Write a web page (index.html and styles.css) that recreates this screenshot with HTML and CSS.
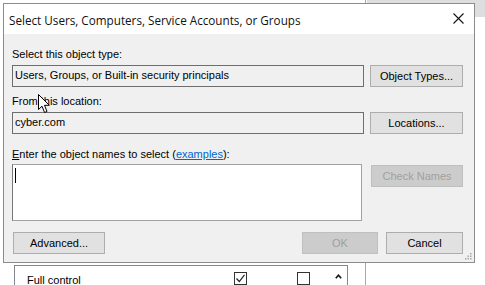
FILE: index.html
```html
<!DOCTYPE html>
<html lang="en">
<head>
  <meta charset="UTF-8">
  <title>Select Users, Computers, Service Accounts, or Groups</title>
  <link rel="stylesheet" href="styles.css">
</head>
<body>
  <div class="desk">
    <!-- window behind the dialog -->
    <div class="behind">
      <div class="pane">
        <div class="perms">
          <div class="perm-row">
            <span class="perm-name">Full control</span>
            <span class="chk">
              <svg width="11" height="11" viewBox="0 0 11 11"><path d="M1.5 5.5 L4.3 8.5 L9.5 1.8" fill="none" stroke="#222" stroke-width="1.2"/></svg>
            </span>
            <span></span>
            <span class="chk"></span>
          </div>
          <div class="scroll">
            <svg width="7" height="5" viewBox="0 0 7 5"><path d="M0.8 4.2 L3.5 1.2 L6.2 4.2" fill="none" stroke="#111" stroke-width="1.6"/></svg>
          </div>
        </div>
      </div>
      <div class="side"><div class="side-head"></div></div>
    </div>

    <div class="dialog">
      <div class="titlebar">
        <span class="title">Select Users, Computers, Service Accounts, or Groups</span>
        <svg class="close" width="11" height="11" viewBox="0 0 11 11"><path d="M0.5 0.5 L10.5 10.5 M10.5 0.5 L0.5 10.5" stroke="#111" stroke-width="1.1"/></svg>
      </div>

      <div class="body">
        <div class="lbl">Select this object type:</div>
        <div class="row">
          <div class="field ro">Users, Groups, or Built-in security principals</div>
          <button class="btn">Object Types...</button>
        </div>

        <div class="lbl second">From this location:</div>
        <div class="row">
          <div class="field ro">cyber.com</div>
          <button class="btn">Locations...</button>
        </div>

        <div class="lbl third"><u>E</u>nter the object names to select (<a href="#">examples</a>):</div>
        <div class="row names-row">
          <div class="field names"><span class="caret"></span></div>
          <button class="btn check" disabled>Check Names</button>
        </div>

        <div class="footer">
          <button class="btn adv">Advanced...</button>
          <span class="spacer"></span>
          <button class="btn ok" disabled>OK</button>
          <button class="btn cancel">Cancel</button>
        </div>
      </div>

      <svg class="grip" width="7" height="7" viewBox="0 0 7 7">
        <rect x="5" y="0" width="1.5" height="1.5" fill="#a8a8a8"/>
        <rect x="2.5" y="2.5" width="1.5" height="1.5" fill="#a8a8a8"/>
        <rect x="5" y="2.5" width="1.5" height="1.5" fill="#a8a8a8"/>
        <rect x="0" y="5" width="1.5" height="1.5" fill="#a8a8a8"/>
        <rect x="2.5" y="5" width="1.5" height="1.5" fill="#a8a8a8"/>
        <rect x="5" y="5" width="1.5" height="1.5" fill="#a8a8a8"/>
      </svg>
    </div>

    <!-- mouse pointer over the dialog -->
    <svg class="pointer" width="13" height="20" viewBox="0 0 13 20">
      <path d="M0.5 0.5 L0.5 15.5 L4 12.2 L6.6 18.5 L9 17.5 L6.5 11.3 L11.3 11.3 Z" fill="#fff" stroke="#000" stroke-width="1"/>
    </svg>
  </div>
</body>
</html>
```

FILE: styles.css
```css
body { margin: 0; background: #fff; font-family: "Liberation Sans", Arial, sans-serif; font-size: 11px; color: #000; }
.desk { position: relative; width: 485px; height: 285px; overflow: hidden; }

/* window behind */
.behind { display: flex; height: 285px; }
.pane { width: 366px; border-right: 1px solid #a8a8a8; padding: 265px 0 0 14px; box-sizing: border-box; }
.perms { width: 334px; height: 60px; border: 1px solid #828790; background: #fff; display: flex; box-sizing: border-box; }
.perm-row { flex: 1; display: grid; grid-template-columns: 207px 13px 50px 13px; align-items: start; padding: 6px 0 0 12px; line-height: 13px; }
.perm-name { padding-top: 2px; }
.chk { width: 13px; height: 13px; border: 1px solid #333; box-sizing: border-box; background: #fff; display: flex; align-items: center; justify-content: center; }
.scroll { width: 17px; display: flex; justify-content: center; padding-top: 8px; box-sizing: border-box; }
.scroll svg { display: block; }
.side { flex: 1; padding-left: 1px; }
.side-head { height: 17px; background: #dedede; }

/* dialog */
.dialog { position: absolute; left: 3px; top: 3px; width: 472px; height: 260px; box-sizing: border-box; border: 1px solid #8c8c8c; background: #f0f0f0; }
.titlebar { height: 30px; background: #fff; display: flex; align-items: center; justify-content: space-between; padding: 0 10px 0 5px; }
.title { font-family: "Open Sans", "Noto Sans", sans-serif; font-size: 11.7px; color: #111; margin-top: 1px; }
.close { display: block; margin-top: -2px; }

.body { padding: 14px 11px 0 8px; }
.lbl { line-height: 13px; height: 13px; margin-bottom: 4px; white-space: nowrap; }
.lbl.second { margin-top: 8px; }
.lbl.third { margin-top: 14px; margin-bottom: 3px; }
.lbl a { color: #0066cc; }

.row { display: grid; grid-template-columns: 352px 93px; column-gap: 6px; }
.row.names-row { grid-template-columns: 350px 92px; justify-content: space-between; align-items: start; }

.field { height: 22px; box-sizing: border-box; border: 1px solid #6e6e6e; padding: 0 2px; line-height: 18px; white-space: nowrap; overflow: hidden; }
.field.ro { background: #f0f0f0; }
.field.names { height: 57px; background: #fff; border-color: #a2a2a2; border-left-color: #777; padding: 3px 0 0 2px; }
.caret { display: block; width: 1px; height: 15px; background: #000; }

.btn { height: 22px; box-sizing: border-box; border: 1px solid #adadad; background: #e1e1e1; font-family: "Liberation Sans", Arial, sans-serif; font-size: 11px; color: #000; padding: 0; }
.btn:disabled { background: #cccccc; border-color: #bfbfbf; color: #a0a0a0; }
.btn.check { margin-top: 1px; }

.footer { display: flex; margin-top: 11px; }
.btn.adv { width: 92px; margin-left: 1px; }
.spacer { flex: 1; }
.btn.ok { width: 76px; margin-right: 8px; }
.btn.cancel { width: 77px; }

.grip { position: absolute; right: 2px; bottom: 2px; }
.pointer { position: absolute; left: 38px; top: 94px; }
```
